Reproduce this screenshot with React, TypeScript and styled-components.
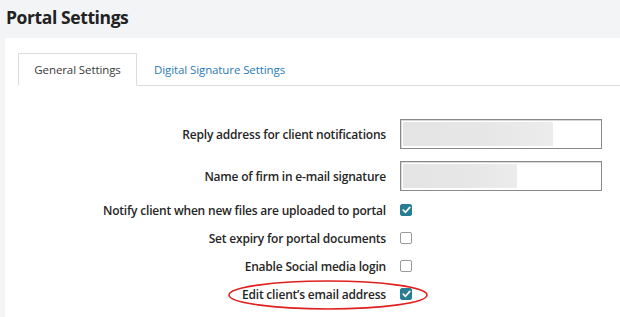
import React from 'react';
import styled, { createGlobalStyle } from 'styled-components';

const GlobalStyle = createGlobalStyle`
  html, body {
    margin: 0;
    padding: 0;
    background: #f3f4f6;
    font-family: "Open Sans", "Liberation Sans", sans-serif;
    overflow: hidden;
  }
`;

const Page = styled.div`
  width: 620px;
  height: 317px;
  background: #f3f4f6;
`;

const Header = styled.header`
  height: 38px;
  box-sizing: border-box;
  padding: 0 0 4px 6px;
  display: flex;
  align-items: center;
`;

const Title = styled.h1`
  margin: 0;
  font-size: 17.5px;
  font-weight: 700;
  color: #222;
  letter-spacing: -0.4px;
`;

const Panel = styled.section`
  margin-left: 5px;
  background: #fff;
  height: 279px;
  padding: 15px 0 0 13px;
  box-sizing: border-box;
`;

const TabList = styled.div`
  display: flex;
  border-bottom: 1px solid #dcdcdc;
  height: 32px;
`;

const Tab = styled.div<{ active?: boolean }>`
  height: 32px;
  box-sizing: border-box;
  padding: 0 17px;
  display: flex;
  align-items: center;
  white-space: nowrap;
  font-size: 11.5px;
  font-weight: 500;
  letter-spacing: -0.1px;
  color: ${p => (p.active ? '#3a3a3a' : '#2a7ab8')};
  ${p =>
    p.active
      ? `border: 1px solid #dcdcdc; border-bottom: 1px solid #fff; background: #fff; height: 33px; width: 119px; padding: 0; justify-content: center;`
      : ''}
`;

const Form = styled.div`
  margin-top: 33px;
  display: flex;
  flex-direction: column;
`;

const Row = styled.div<{ h: number; gap?: number }>`
  display: flex;
  align-items: center;
  height: ${p => p.h}px;
  margin-top: ${p => p.gap ?? 0}px;
  position: relative;
`;

const Label = styled.label`
  width: 368px;
  text-align: right;
  font-size: 12px;
  font-weight: 600;
  letter-spacing: -0.2px;
  color: #262626;
  padding-right: 14px;
  box-sizing: content-box;
  white-space: nowrap;
`;

const InputBox = styled.div`
  width: 202px;
  height: 30px;
  box-sizing: border-box;
  border: 1px solid #8a8a8a;
  box-shadow: inset 1px 1px 0 #d8d8d8;
  background: #fff;
  padding: 2px;
  display: flex;
  align-items: stretch;
`;

const Blur = styled.div<{ w: number }>`
  width: ${p => p.w}px;
  background: linear-gradient(90deg, #e4e4e4 0%, #e6e6e6 50%, #ececec 100%);
  filter: blur(0.6px);
`;

const Check = styled.span<{ checked?: boolean }>`
  width: 12px;
  height: 12px;
  box-sizing: border-box;
  border-radius: 2px;
  border: 1px solid ${p => (p.checked ? '#277e92' : '#9a9a9a')};
  background: ${p => (p.checked ? '#277e92' : '#fff')};
  display: inline-flex;
  align-items: center;
  justify-content: center;
`;

const Ring = styled.svg`
  position: absolute;
  left: 209px;
  top: -1px;
  pointer-events: none;
`;

const Tick = () => (
  <svg width="9" height="8" viewBox="0 0 9 8">
    <path d="M1.3 4.2 L3.5 6.3 L7.8 1.4" fill="none" stroke="#fff" strokeWidth="1.7" strokeLinecap="round" strokeLinejoin="round" />
  </svg>
);

const checks = [
  { label: 'Notify client when new files are uploaded to portal', checked: true },
  { label: 'Set expiry for portal documents', checked: false },
  { label: 'Enable Social media login', checked: false },
  { label: 'Edit client\u2019s email address', checked: true, ring: true },
];

export default function App() {
  return (
    <Page>
      <GlobalStyle />
      <Header>
        <Title>Portal Settings</Title>
      </Header>
      <Panel>
        <TabList>
          <Tab active>General Settings</Tab>
          <Tab>Digital Signature Settings</Tab>
        </TabList>
        <Form>
          <Row h={30}>
            <Label>Reply address for client notifications</Label>
            <InputBox>
              <Blur w={150} />
            </InputBox>
          </Row>
          <Row h={30} gap={12}>
            <Label>Name of firm in e-mail signature</Label>
            <InputBox>
              <Blur w={114} />
            </InputBox>
          </Row>
          {checks.map((c, i) => (
            <Row key={c.label} h={28} gap={i === 0 ? 5 : 0}>
              <Label>{c.label}</Label>
              <Check checked={c.checked}>{c.checked && <Tick />}</Check>
              {c.ring && (
                <Ring width="202" height="32" viewBox="0 0 202 32">
                  <ellipse cx="101" cy="16" rx="99" ry="14" fill="none" stroke="#e0201e" strokeWidth="1.6" />
                </Ring>
              )}
            </Row>
          ))}
        </Form>
      </Panel>
    </Page>
  );
}
